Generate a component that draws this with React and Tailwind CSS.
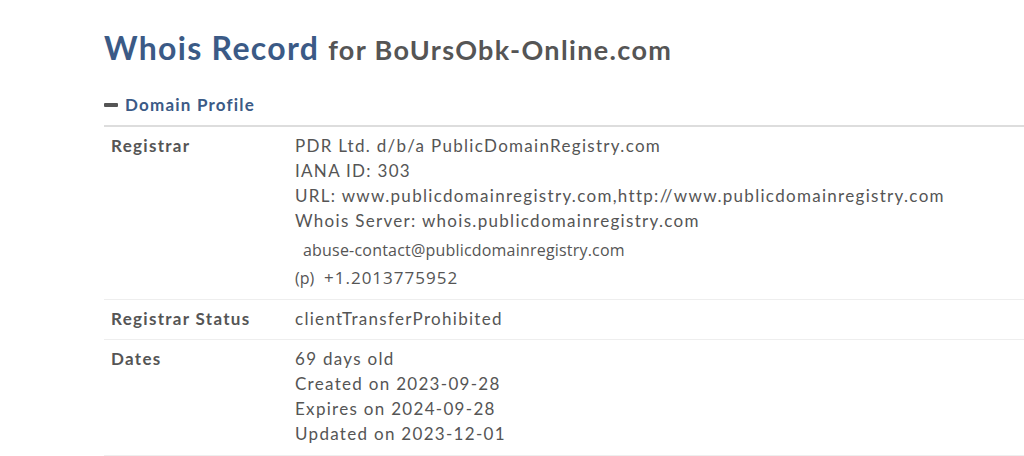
export default function App() {
  const rows = [
    {
      label: 'Registrar',
      lines: [
        'PDR Ltd. d/b/a PublicDomainRegistry.com',
        'IANA ID: 303',
        'URL: www.publicdomainregistry.com,http://www.publicdomainregistry.com',
        'Whois Server: whois.publicdomainregistry.com',
      ],
      contact: true,
      pad: 'pb-[6px]',
    },
    { label: 'Registrar Status', lines: ['clientTransferProhibited'], pad: 'pb-[8px]' },
    {
      label: 'Dates',
      lines: ['69 days old', 'Created on 2023-09-28', 'Expires on 2024-09-28', 'Updated on 2023-12-01'],
      pad: 'pb-[9px]',
    },
  ];

  return (
    <div className="w-[1024px] h-[456px] overflow-hidden bg-white pl-[104px] pt-[26px] text-[#555]" style={{ fontFamily: 'Lato, "Open Sans", sans-serif' }}>
      <h1 className="flex items-baseline gap-[9px] leading-[44px]">
        <span className="text-[32px] font-bold tracking-[1.3px] text-[#3b5a86]">Whois Record</span>
        <span className="text-[27px] font-bold tracking-[1.35px] text-[#555]">for BoUrsObk-Online.com</span>
      </h1>
      <div className="mt-[20px] flex items-center gap-[7px] pb-[7px] border-b-2 border-[#ddd] text-[17px] font-bold tracking-[1.2px] text-[#3b5a86]">
        <span className="block w-[14px] h-[4px] bg-[#555] rounded-[1px]" />
        <span>Domain Profile</span>
      </div>
      {rows.map((row) => (
        <div key={row.label} className={`flex border-b border-[#eee] pt-[6px] ${row.pad} text-[17px] leading-[25px] tracking-[1.3px]`}>
          <div className="w-[191px] shrink-0 pl-[7px] font-bold tracking-[1.3px]">{row.label}</div>
          <div>
            {row.lines.map((l) => (
              <div key={l}>{l}</div>
            ))}
            {row.contact && (
              <div className="tracking-normal" style={{ fontFamily: '"Open Sans", sans-serif' }}>
                <div className="pl-[8px] pt-[5px] text-[16px] leading-[25px] tracking-[0.2px]">abuse-contact@publicdomainregistry.com</div>
                <div className="flex items-baseline leading-[29px]">
                  <span className="text-[16px] w-[29px]">(p)</span>
                  <span className="text-[17px] tracking-[1px]">+1.2013775952</span>
                </div>
              </div>
            )}
          </div>
        </div>
      ))}
    </div>
  );
}
